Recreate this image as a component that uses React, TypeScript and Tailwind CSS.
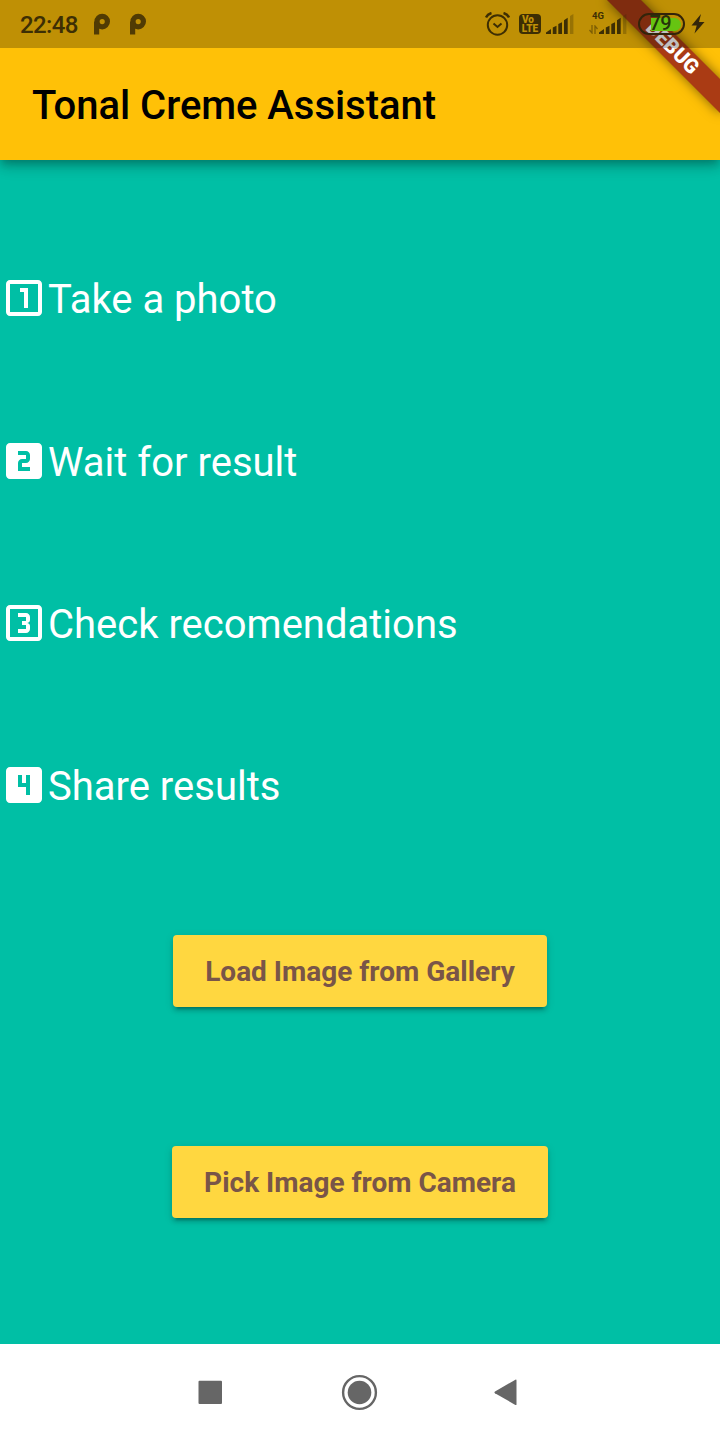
import React from "react";

const FRAME =
  "M19 3H5c-1.1 0-2 .9-2 2v14c0 1.1.9 2 2 2h14c1.1 0 2-.9 2-2V5c0-1.1-.9-2-2-2z";

const steps = [
  { label: "Take a photo", icon: FRAME + "m0 16H5V5h14v14zm-7-2h2V7h-4v2h2z" },
  {
    label: "Wait for result",
    icon:
      FRAME +
      "m-4 8c0 1.1-.9 2-2 2h-2v2h4v2H9v-4c0-1.1.9-2 2-2h2V9H9V7h4c1.1 0 2 .9 2 2v2z",
  },
  {
    label: "Check recomendations",
    icon:
      FRAME +
      "m0 16H5V5h14v14zM15 15v-1.5c0-.83-.67-1.5-1.5-1.5.83 0 1.5-.67 1.5-1.5V9c0-1.1-.9-2-2-2H9v2h4v2h-2v2h2v2H9v2h4c1.1 0 2-.9 2-2z",
  },
  { label: "Share results", icon: FRAME + "m-4 14h-2v-4H9V7h2v4h2V7h2v10z" },
];

function ParkingGlyph() {
  return (
    <svg className="h-[22px] w-[18px]" viewBox="0 0 18 22" fill="none">
      <circle cx="9.200" cy="8.600" r="5.200" stroke="#503b04" strokeWidth="5.200" />
      <path d="M1 8.600h5.200V21.500H1z" fill="#503b04" />
    </svg>
  );
}

function Signal() {
  return (
    <svg className="h-[20px] w-[28px]" viewBox="0 0 28 20" fill="#3d2e04">
      <path d="M0 20v-1.600l5-3.400V20zM6.800 13.400l3.700-1.600V20H6.800zM12.300 9.900l3.700-1.700V20h-3.700zM18 6.200l3.700-2.400V20H18z" />
      <path d="M24 2l3.400-2v20H24z" opacity=".3" />
    </svg>
  );
}

function StatusBar() {
  return (
    <div className="absolute inset-x-0 top-0 flex h-12 items-start bg-black/25 text-[#3d2e04]">
      <span className="ml-5 mt-[11px] text-[24px] font-medium leading-[28px] tracking-[-0.6px]">
        22:48
      </span>
      <div className="ml-[15px] mt-[13px] flex gap-[18px]">
        <ParkingGlyph />
        <ParkingGlyph />
      </div>
      <div className="ml-auto flex h-12 items-start">
        <svg
          className="mr-[9px] mt-3 h-[24px] w-[25px]"
          viewBox="0 0 25 24"
          fill="none"
          stroke="#3d2e04"
          strokeWidth="2"
        >
          <circle cx="12.500" cy="13" r="9.700" />
          <path d="M8.500 11.500l4 3.500 4-3.500" />
          <path d="M1 5.500Q2.500 2 6.500 1M24 5.500Q22.500 2 18.500 1" strokeWidth="2.400" />
        </svg>
        <div className="mr-[5px] mt-[14px] flex h-[20px] w-[22px] flex-col items-center rounded-[4px] bg-[#3d2e04] pt-[1px] text-[10px] font-black leading-[9px] text-[#c09106]">
          <span className="mr-[4px]">Vo</span>
          <span>LTE</span>
        </div>
        <div className="mr-[15px] mt-[14px]">
          <Signal />
        </div>
        <div className="flex h-[36px] w-[39px] flex-col">
          <span className="ml-[3px] mt-[11px] text-[9.500px] font-bold leading-[10px]">4G</span>
          <div className="mt-[-7px] flex items-end">
            <svg
              className="h-[9px] w-[10px] opacity-50"
              viewBox="0 0 10 9"
              fill="none"
              stroke="#3d2e04"
              strokeWidth="1.300"
            >
              <path d="M3 0v8L.5 5M6 9V1l2.500 3" />
            </svg>
            <Signal />
          </div>
        </div>
        <div className="ml-[10px] mt-[13px] flex h-[22px] w-[47px] rounded-full border-2 border-[#33240a] p-[2.500px]">
          <div className="flex h-full w-full items-center rounded-full bg-[linear-gradient(90deg,transparent_0_8px,#66c411_8px)] pb-[2px] pl-[7px] text-[20px] font-medium leading-none tracking-[-0.500px] text-[#25330a]">
            79
          </div>
        </div>
        <svg className="ml-[6px] mr-[15px] mt-[14px] h-[20px] w-[14px]" viewBox="0 0 14 20">
          <path d="M10 0L.5 11.500h5.200L3.500 19.500 13.500 8H8z" fill="#33260a" />
        </svg>
      </div>
    </div>
  );
}

function ActionButton({ children }: { children: React.ReactNode }) {
  return (
    <button className="h-[72px] whitespace-nowrap rounded-[4px] bg-[#ffd740] px-8 pt-[2px] text-[28px] font-bold text-[#795548] shadow-[0_6px_2px_-4px_rgba(0,0,0,.2),0_4px_4px_rgba(0,0,0,.14),0_2px_10px_rgba(0,0,0,.12)]">
      {children}
    </button>
  );
}

export default function App() {
  return (
    <div className="relative flex h-[1440px] w-[720px] flex-col overflow-hidden bg-[#00bfa5] font-['Roboto',sans-serif]">
      <header className="flex h-[160px] shrink-0 items-center bg-[#ffc107] pl-8 pt-[52px] shadow-[0_4px_8px_-2px_rgba(0,0,0,.2),0_8px_10px_rgba(0,0,0,.14),0_2px_20px_rgba(0,0,0,.12)]">
        <h1 className="text-[40px] font-medium leading-[48px] tracking-[-0.040px] text-black">
          Tonal Creme Assistant
        </h1>
      </header>
      <main className="flex flex-1 flex-col items-center pt-[114.300px]">
        <ul className="flex w-full flex-col gap-[114.300px] text-white">
          {steps.map((step) => (
            <li key={step.label} className="flex h-12 items-center">
              <svg className="h-12 w-12 shrink-0" viewBox="0 0 24 24" fill="currentColor">
                <path d={step.icon} />
              </svg>
              <span className="pt-[4px] text-[40px] leading-[48px]">{step.label}</span>
            </li>
          ))}
        </ul>
        <div className="mt-[126.300px] flex flex-col items-center gap-[138.400px]">
          <ActionButton>Load Image from Gallery</ActionButton>
          <ActionButton>Pick Image from Camera</ActionButton>
        </div>
      </main>
      <nav className="flex h-24 shrink-0 items-center bg-white text-[#666]">
        <svg className="ml-[198px] h-6 w-6" viewBox="0 0 24 24" fill="currentColor">
          <rect x=".5" y=".8" width="23.500" height="23.200" rx="1" />
        </svg>
        <svg className="ml-[119px] h-[37px] w-[37px]" viewBox="0 0 37 37" fill="currentColor">
          <circle cx="18.500" cy="18.500" r="11.800" />
          <circle cx="18.500" cy="18.500" r="16.400" fill="none" stroke="currentColor" strokeWidth="2.400" />
        </svg>
        <svg className="ml-[115px] h-[28px] w-[25px]" viewBox="0 0 25 28" fill="currentColor">
          <path d="M22.400 1.700Q23.500 1.200 23.500 2.400v23.800q0 1.200-1.100.700L2 15.200Q.8 14.300 2 13.400z" />
        </svg>
      </nav>
      <div className="absolute left-[592px] top-[36px] flex h-6 w-40 rotate-45 items-center justify-center bg-[#aa3b14] pb-[1px] text-[20.400px] font-black leading-none text-white shadow-[0_0_12px_rgba(0,0,0,.5)]">
        DEBUG
      </div>
      <StatusBar />
    </div>
  );
}
